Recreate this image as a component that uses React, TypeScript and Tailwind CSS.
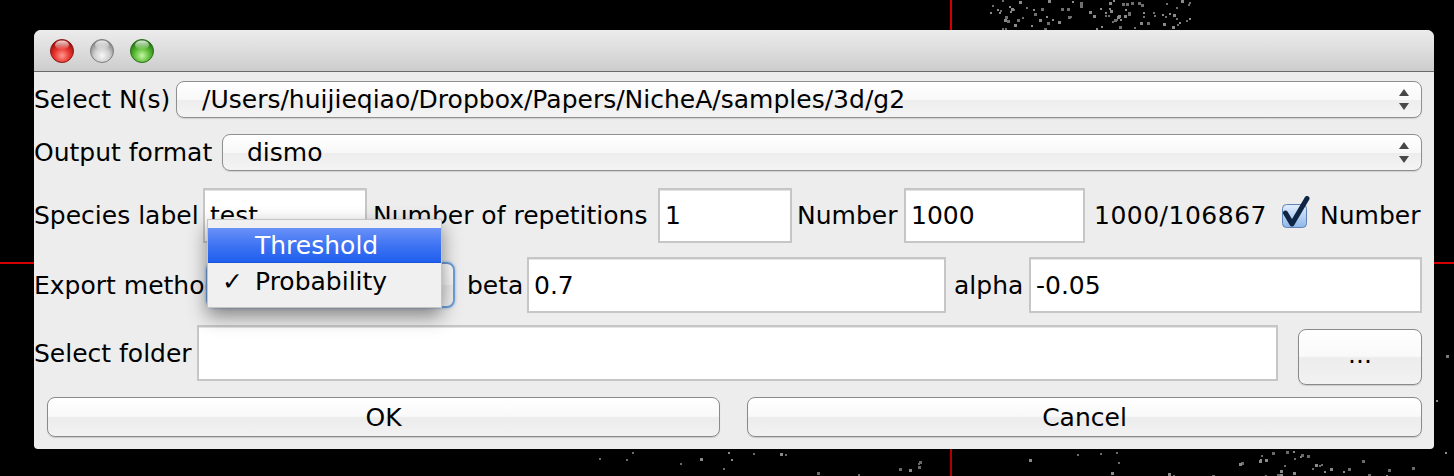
import React from "react";

function rng(seed: number) {
  let s = seed;
  return () => {
    s = (s * 1103515245 + 12345) % 2147483648;
    return s / 2147483648;
  };
}

function Background() {
  const r = rng(7);
  const dots: { x: number; y: number; s: number; c: string }[] = [];
  for (let i = 0; i < 90; i++) {
    dots.push({ x: 990 + r() * 200, y: r() * 28, s: r() > 0.6 ? 3 : 2, c: r() > 0.5 ? "#8a8a8a" : "#6f6f6f" });
  }
  for (let i = 0; i < 60; i++) {
    const cluster = r() > 0.5;
    dots.push({
      x: cluster ? 1240 + r() * 130 : 590 + r() * 860,
      y: 451 + r() * 25,
      s: r() > 0.6 ? 3 : 2,
      c: r() > 0.5 ? "#8a8a8a" : "#6a6a6a",
    });
  }
  dots.push({ x: 1446, y: 355, s: 3, c: "#7a7a7a" });
  dots.push({ x: 1436, y: 400, s: 2, c: "#8a8a8a" });
  return (
    <svg className="absolute inset-0" width={1454} height={476}>
      <rect x={0} y={0} width={1454} height={476} fill="#000" />
      <rect x={950} y={0} width={2} height={30} fill="#d40000" />
      <rect x={950} y={449} width={2} height={27} fill="#b00000" />
      <rect x={0} y={262} width={34} height={2} fill="#d40000" />
      <rect x={1434} y={262} width={20} height={2} fill="#d40000" />
      {dots.map((d, i) => (
        <rect key={i} x={Math.round(d.x)} y={Math.round(d.y)} width={d.s} height={d.s} fill={d.c} />
      ))}
    </svg>
  );
}

function TrafficLights() {
  return (
    <svg width={130} height={41} className="block">
      <defs>
        <radialGradient id="red" cx="50%" cy="70%" r="60%">
          <stop offset="0%" stopColor="#ff9a90" />
          <stop offset="55%" stopColor="#e9362f" />
          <stop offset="100%" stopColor="#a3140f" />
        </radialGradient>
        <radialGradient id="gray" cx="50%" cy="70%" r="60%">
          <stop offset="0%" stopColor="#f7f7f7" />
          <stop offset="55%" stopColor="#cfcfcf" />
          <stop offset="100%" stopColor="#8c8c8c" />
        </radialGradient>
        <radialGradient id="green" cx="50%" cy="70%" r="60%">
          <stop offset="0%" stopColor="#c6f5a8" />
          <stop offset="55%" stopColor="#5cbd36" />
          <stop offset="100%" stopColor="#2a7c16" />
        </radialGradient>
        <linearGradient id="hl" x1="0" y1="0" x2="0" y2="1">
          <stop offset="0%" stopColor="#fff" stopOpacity="0.85" />
          <stop offset="100%" stopColor="#fff" stopOpacity="0.05" />
        </linearGradient>
      </defs>
      {[
        { cx: 28, f: "url(#red)", s: "#8e1a16" },
        { cx: 68, f: "url(#gray)", s: "#7e7e7e" },
        { cx: 108, f: "url(#green)", s: "#2b6e1b" },
      ].map((c, i) => (
        <g key={i}>
          <circle cx={c.cx} cy={21} r={11.5} fill={c.f} stroke={c.s} strokeWidth={1} />
          <ellipse cx={c.cx} cy={15} rx={7} ry={4.5} fill="url(#hl)" />
        </g>
      ))}
    </svg>
  );
}

function Arrows() {
  return (
    <svg width={10} height={22} className="block">
      <polygon points="5,0 10,7 0,7" fill="#474747" />
      <polygon points="0,14 10,14 5,21" fill="#474747" />
    </svg>
  );
}

function Combo({ text, padLeft }: { text: string; padLeft: string }) {
  return (
    <div
      className={`flex-1 h-full flex items-center justify-between rounded-[8px] border border-[#8f8f8f] bg-[linear-gradient(to_bottom,#ffffff_0%,#f8f8f8_50%,#ededed_51%,#f4f4f4_100%)] shadow-[0_1px_1px_rgba(0,0,0,0.12)] pr-[12px] ${padLeft}`}
    >
      <span className="whitespace-nowrap">{text}</span>
      <Arrows />
    </div>
  );
}

function Field({ text, className }: { text?: string; className: string }) {
  return (
    <div
      className={`h-full flex items-center bg-white border-2 border-[#c6c6c6] shadow-[inset_0_1px_0_#e4e4e4] pl-[5px] whitespace-nowrap shrink-0 ${className}`}
    >
      {text}
    </div>
  );
}

function Checkbox() {
  return (
    <svg width={28} height={33} className="block shrink-0 -mt-[6px]">
      <defs>
        <linearGradient id="cb" x1="0" y1="0" x2="0" y2="1">
          <stop offset="0%" stopColor="#e3eefb" />
          <stop offset="50%" stopColor="#b9d3f3" />
          <stop offset="100%" stopColor="#8fb6ea" />
        </linearGradient>
      </defs>
      <rect x={0.5} y={8.5} width={24} height={23} rx={4} fill="url(#cb)" stroke="#5f83b4" />
      <path d="M3.5 17 L10 28 L25 2.5" fill="none" stroke="#0f2544" strokeWidth={5} strokeLinecap="round" strokeLinejoin="round" />
    </svg>
  );
}

function Button({ label, className }: { label: string; className: string }) {
  return (
    <div
      className={`h-full flex items-center justify-center rounded-[8px] border border-[#8a8a8a] bg-[linear-gradient(to_bottom,#ffffff_0%,#f9f9f9_48%,#ececec_52%,#f2f2f2_100%)] shadow-[0_1px_1px_rgba(0,0,0,0.15)] ${className}`}
    >
      {label}
    </div>
  );
}

export default function App() {
  return (
    <div className="relative w-[1454px] h-[476px] overflow-hidden bg-black pt-[30px] pl-[34px] font-['DejaVu_Sans','Liberation_Sans',sans-serif] text-[25px] text-black leading-none">
      <Background />
      <div className="relative w-[1400px] h-[419px] flex flex-col rounded-t-[7px] rounded-b-[4px] bg-[#ededed]">
        <div className="h-[42px] shrink-0 rounded-t-[7px] border-b border-[#6a6a6a] bg-[linear-gradient(to_bottom,#ececec_0%,#e0e0e0_40%,#cdcdcd_100%)]">
          <TrafficLights />
        </div>
        <div className="flex flex-col pt-[9px] pb-[12px] pr-[12px]">
          {/* Row 1 */}
          <div className="h-[37px] flex items-center">
            <div className="w-[142px] shrink-0 whitespace-nowrap">Select N(s)</div>
            <Combo text="/Users/huijieqiao/Dropbox/Papers/NicheA/samples/3d/g2" padLeft="pl-[25px]" />
          </div>
          {/* Row 2 */}
          <div className="h-[37px] mt-[16px] flex items-center">
            <div className="w-[188px] shrink-0 whitespace-nowrap">Output format</div>
            <Combo text="dismo" padLeft="pl-[24px]" />
          </div>
          {/* Row 3 */}
          <div className="h-[55px] mt-[17px] flex items-center">
            <div className="w-[169px] shrink-0 whitespace-nowrap">Species label</div>
            <Field text="test" className="w-[164px]" />
            <div className="w-[291px] shrink-0 pl-[6px] whitespace-nowrap">Number of repetitions</div>
            <Field text="1" className="w-[134px]" />
            <div className="w-[112px] shrink-0 pl-[5px] whitespace-nowrap">Number</div>
            <Field text="1000" className="w-[181px]" />
            <div className="w-[197px] shrink-0 pl-[9px] whitespace-nowrap tracking-[0.5px]">1000/106867</div>
            <Checkbox />
            <div className="pl-[10px] whitespace-nowrap">Number</div>
          </div>
          {/* Row 4 */}
          <div className="h-[56px] mt-[14px] flex items-center">
            <div className="w-[172px] shrink-0 whitespace-nowrap">Export method</div>
            <div className="w-[249px] h-[46px] shrink-0 rounded-[8px] border-2 border-[#6f9fd8] bg-[linear-gradient(to_bottom,#ffffff_0%,#f8f8f8_50%,#ededed_51%,#f4f4f4_100%)] shadow-[0_0_3px_#8ab4e8]" />
            <div className="w-[72px] shrink-0 pl-[12px] whitespace-nowrap">beta</div>
            <Field text="0.7" className="w-[419px]" />
            <div className="w-[83px] shrink-0 pl-[8px] whitespace-nowrap">alpha</div>
            <Field text="-0.05" className="flex-1" />
          </div>
          {/* Row 5 */}
          <div className="h-[56px] mt-[12px] flex items-start">
            <div className="w-[163px] h-full shrink-0 flex items-center whitespace-nowrap">Select folder</div>
            <Field className="flex-1 shrink" />
            <Button label="..." className="w-[124px] h-[40px] mt-[4px] ml-[20px] shrink-0 pb-[6px]" />
          </div>
          {/* Row 6 */}
          <div className="h-[40px] mt-[16px] flex pl-[13px]">
            <Button label="OK" className="w-[673px] shrink-0" />
            <Button label="Cancel" className="flex-1 ml-[27px]" />
          </div>
        </div>

        {/* Popup menu */}
        <div className="absolute left-[173px] top-[189px] w-[235px] h-[89px] bg-[#f0f0f0] border border-[#c4c4c4] shadow-[0_8px_18px_rgba(0,0,0,0.45)] pt-[8px]">
          <div className="h-[35px] flex items-center pl-[47px] text-white bg-[linear-gradient(to_bottom,#6a91f7_0%,#3f74f3_50%,#1f5fee_100%)] border-b border-[#1a55d8]">
            Threshold
          </div>
          <div className="h-[36px] flex items-center pl-[14px]">
            <span className="w-[33px]">✓</span>
            <span>Probability</span>
          </div>
        </div>
      </div>
    </div>
  );
}
